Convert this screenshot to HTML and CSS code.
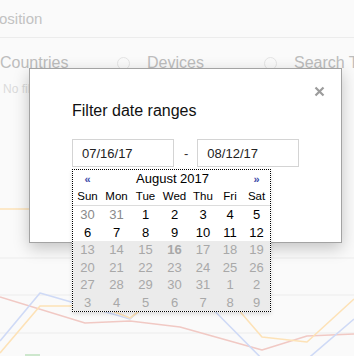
FILE: index.html
```html
<!DOCTYPE html>
<html lang="en">
<head>
    <meta charset="UTF-8">
    <meta name="viewport" content="width=device-width, initial-scale=1.0">
    <title>Filter date ranges</title>
    <link rel="stylesheet" href="styles.css">
</head>
<body>
    <div class="page">
        <div class="page-title">osition</div>
        <div class="options">
            <label class="option"><span class="radio"></span>Countries</label>
            <label class="option"><span class="radio"></span>Devices</label>
            <label class="option"><span class="radio"></span>Search Terms</label>
        </div>
        <div class="note">No filters applied</div>
        <svg class="chart" width="354" height="256" viewBox="0 0 354 256">
            <g class="grid">
                <line x1="0" y1="158" x2="354" y2="158"/>
                <line x1="0" y1="195" x2="354" y2="195"/>
                <line x1="0" y1="233" x2="354" y2="233"/>
            </g>
            <polyline class="series orange" points="0,109 80,109"/>
            <polyline class="series pink" points="0,197 85,223 130,221 180,227 262,250 307,236 354,234"/>
            <polyline class="series blue" points="0,241 40,193 130,219 180,176 283,280 354,219"/>
            <polyline class="series orange" points="0,253 40,206 100,206 130,218 180,180 230,200 262,237 307,242 354,199"/>
            <polyline class="series green" points="25,255 40,255"/>
        </svg>
    </div>

    <div class="modal">
        <div class="modal-head">
            <svg class="close" width="11" height="11" viewBox="0 0 11 11">
                <path d="M1.5 1.5L9.5 9.5M9.5 1.5L1.5 9.5"/>
            </svg>
        </div>
        <h2 class="modal-title">Filter date ranges</h2>
        <div class="range">
            <input class="date-input" type="text" value="07/16/17">
            <span class="dash">-</span>
            <input class="date-input" type="text" value="08/12/17">

            <div class="calendar">
                <table>
                    <colgroup>
                        <col style="width:29px"><col style="width:29px"><col style="width:29px"><col style="width:29px"><col style="width:28px"><col style="width:26px"><col style="width:27px">
                    </colgroup>
                    <thead>
                        <tr class="month">
                            <td class="nav">&laquo;</td>
                            <td colspan="5">August 2017</td>
                            <td class="nav">&raquo;</td>
                        </tr>
                        <tr class="days">
                            <th>Sun</th><th>Mon</th><th>Tue</th><th>Wed</th><th>Thu</th><th>Fri</th><th>Sat</th>
                        </tr>
                    </thead>
                    <tbody>
                        <tr><td class="other">30</td><td class="other">31</td><td>1</td><td>2</td><td>3</td><td>4</td><td>5</td></tr>
                        <tr><td>6</td><td>7</td><td>8</td><td>9</td><td>10</td><td>11</td><td>12</td></tr>
                        <tr class="off"><td>13</td><td>14</td><td>15</td><td class="today">16</td><td>17</td><td>18</td><td>19</td></tr>
                        <tr class="off"><td>20</td><td>21</td><td>22</td><td>23</td><td>24</td><td>25</td><td>26</td></tr>
                        <tr class="off"><td>27</td><td>28</td><td>29</td><td>30</td><td>31</td><td>1</td><td>2</td></tr>
                        <tr class="off"><td>3</td><td>4</td><td>5</td><td>6</td><td>7</td><td>8</td><td>9</td></tr>
                    </tbody>
                </table>
            </div>
        </div>
    </div>
</body>
</html>
```

FILE: styles.css
```css
body {
    margin: 0;
    width: 354px;
    height: 356px;
    overflow: hidden;
    position: relative;
    background-color: #fafafa;
    font-family: "Liberation Sans", Arial, sans-serif;
}
.page-title {
    height: 37px;
    line-height: 37px;
    border-bottom: 1px solid #ececec;
    font-size: 15px;
    color: #c2c2c2;
    margin-left: -1px;
}
.options {
    display: flex;
    margin-left: -30px;
    padding-top: 16px;
}
.option {
    flex: none;
    width: 147px;
    display: flex;
    align-items: center;
    gap: 17px;
    font-size: 16px;
    line-height: 18px;
    color: #bdbdbd;
    white-space: nowrap;
}
.radio {
    flex: none;
    width: 13px;
    height: 13px;
    box-sizing: border-box;
    border: 1px solid #e4e4e4;
    border-radius: 50%;
}
.note {
    margin: 10px 0 0 3px;
    font-size: 12px;
    line-height: 14px;
    color: #dadada;
    white-space: nowrap;
}
.chart {
    display: block;
    margin-top: 4px;
}
.grid line {
    stroke: #ececec;
    stroke-width: 1;
}
.series {
    fill: none;
    stroke-width: 1.6;
    stroke-linejoin: round;
}
.pink { stroke: #f1c9c4; }
.blue { stroke: #cfdaf6; }
.orange { stroke: #fde2b7; }
.green { stroke: #cde7cd; stroke-width: 2; }

.modal {
    position: absolute;
    left: 29px;
    top: 68px;
    width: 313px;
    height: 175px;
    box-sizing: border-box;
    background: #fff;
    border: 1px solid #a3a3a3;
    box-shadow: 0 5px 15px rgba(0,0,0,0.22);
    padding: 17px 16px 0 42px;
}
.modal-head {
    display: flex;
    justify-content: flex-end;
    height: 11px;
}
.close path {
    stroke: #9c9c9c;
    stroke-width: 2.2;
}
.modal-title {
    margin: 4px 0 0;
    font-size: 16px;
    line-height: 20px;
    font-weight: normal;
    color: #111;
}
.range {
    position: relative;
    display: flex;
    align-items: center;
    margin-top: 18px;
}
.date-input {
    width: 102px;
    height: 28px;
    box-sizing: border-box;
    border: 1px solid #d4d4d4;
    padding: 0 0 0 9px;
    margin: 0;
    font-family: "Liberation Sans", Arial, sans-serif;
    font-size: 13px;
    color: #222;
    outline: none;
}
.dash {
    margin: 0 9px 0 10px;
    font-size: 13px;
    color: #333;
}
.calendar {
    position: absolute;
    left: 0;
    top: 30px;
    border: 1px dotted #000;
    background: #fff;
    box-shadow: 0 2px 4px rgba(0,0,0,0.12);
}
.calendar table {
    border-collapse: collapse;
    table-layout: fixed;
    width: 197px;
}
.calendar td,
.calendar th {
    height: 17.5px;
    padding: 0;
    text-align: center;
    font-size: 13px;
    color: #000;
}
.calendar th {
    font-size: 11.5px;
    font-weight: normal;
    border-bottom: 1px solid #dcdcdc;
}
.calendar .nav {
    font-size: 11px;
    font-weight: bold;
    color: #3c4aa8;
}
.calendar .other {
    color: #8a8a8a;
}
.off td {
    background-color: #ebebeb;
    color: #a8a8a8;
}
.off .today {
    font-weight: bold;
}
```
